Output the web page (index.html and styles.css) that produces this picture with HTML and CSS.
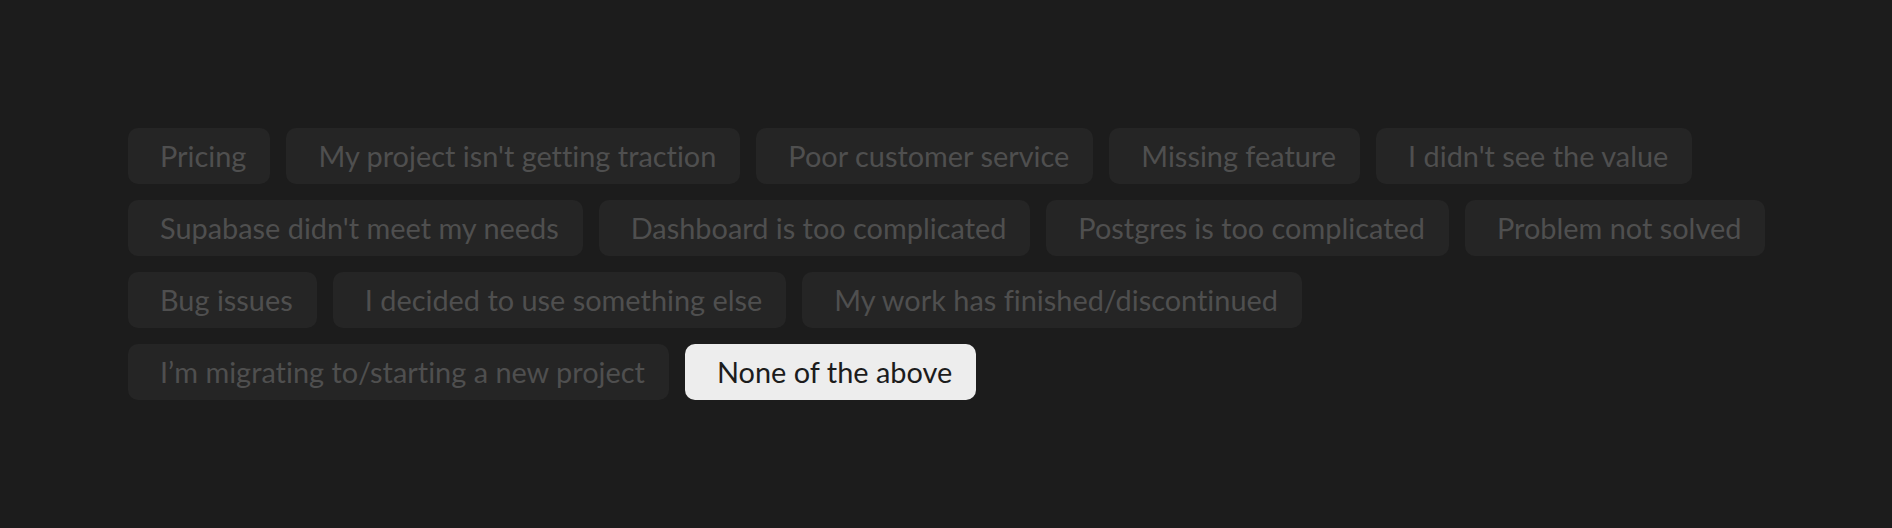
FILE: index.html
```html
<!DOCTYPE html>
<html lang="en">
<head>
<meta charset="utf-8">
<title>Reasons</title>
<link rel="stylesheet" href="styles.css">
</head>
<body>
<main class="page">
  <div class="options">
    <button class="chip">Pricing</button>
    <button class="chip">My project isn't getting traction</button>
    <button class="chip">Poor customer service</button>
    <button class="chip">Missing feature</button>
    <button class="chip">I didn't see the value</button>
    <button class="chip">Supabase didn't meet my needs</button>
    <button class="chip">Dashboard is too complicated</button>
    <button class="chip">Postgres is too complicated</button>
    <button class="chip">Problem not solved</button>
    <button class="chip">Bug issues</button>
    <button class="chip">I decided to use something else</button>
    <button class="chip">My work has finished/discontinued</button>
    <button class="chip">I’m migrating to/starting a new project</button>
    <button class="chip chip--active">None of the above</button>
  </div>
</main>
</body>
</html>
```
FILE: styles.css
```css
html, body {
  margin: 0;
  padding: 0;
  background: #1c1c1c;
  height: 100%;
}

.page {
  padding: 128px 64px 0 128px;
}

.options {
  display: flex;
  flex-wrap: wrap;
  gap: 16px;
}

.chip {
  font-family: "Lato", "Liberation Sans", sans-serif;
  font-size: 28.9px;
  font-weight: 400;
  font-variant-ligatures: none;
  font-feature-settings: "liga" 0, "clig" 0;
  line-height: 56px;
  height: 56px;
  padding: 0 24px 0 32px;
  margin: 0;
  border: none;
  border-radius: 10px;
  background: #252525;
  color: #4f4f4f;
  white-space: nowrap;
  cursor: pointer;
}

.chip--active {
  background: #ededed;
  color: #1c1c1c;
}
```
